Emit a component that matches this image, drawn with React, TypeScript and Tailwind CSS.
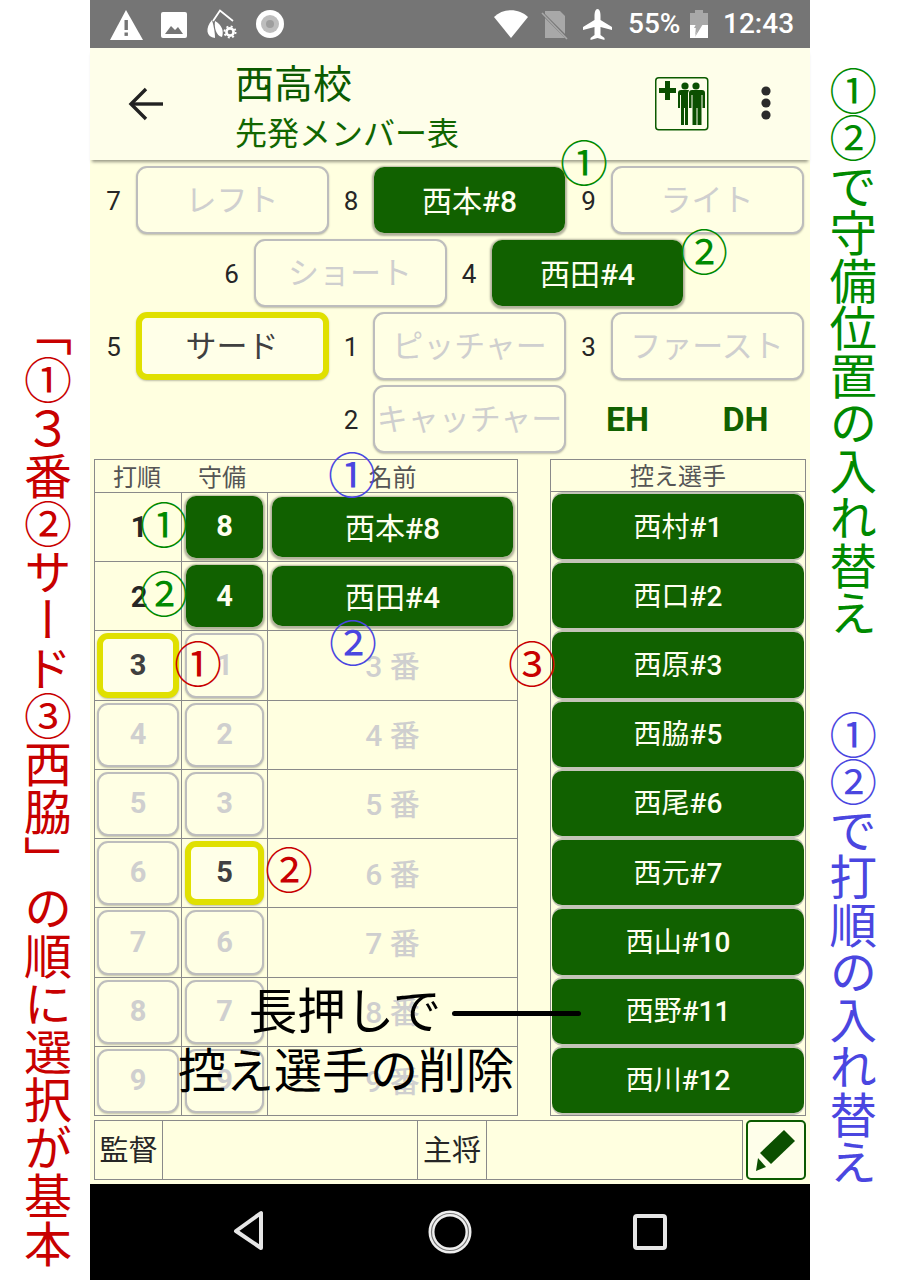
import React from 'react';

const FONT = 'font-["Roboto","Noto_Sans_CJK_JP",sans-serif]';

const GREEN = 'bg-[#116100] bg-clip-padding border border-transparent text-[#fffff0] shadow-[0_1px_2px_1px_rgba(0,0,0,0.3)]';
const EMPTY = 'bg-[#ffffe4] text-[#cfcfcf] border-2 border-[#bdbdbd] shadow-[0_1px_2px_rgba(0,0,0,0.25)]';
const PICKED = 'bg-[#ffffe8] text-[#404040] border-[6px] border-[#e0e000] shadow-[0_1px_2px_rgba(0,0,0,0.25)]';

type Kind = 'green' | 'empty' | 'picked';

const kindClass = (kind: Kind) => (kind === 'green' ? GREEN : kind === 'picked' ? PICKED : EMPTY);

// the # part of a player name is a bit heavier than the kanji
const PlayerName = ({ name }: { name: string }) => (
  <>
    {name.slice(0, 2)}
    <span className="font-medium">{name.slice(2)}</span>
  </>
);

const Slot = ({ num, label, kind = 'empty' }: { num: string; label: string; kind?: Kind }) => (
  <div className="flex items-center w-[237.5px] shrink-0">
    <span className="w-[44px] text-center text-[26px] text-[#262626] pt-[3px]">{num}</span>
    <div
      className={`w-[193px] h-[68px] pt-[3px] rounded-[11px] flex items-center justify-center whitespace-nowrap ${
        kind === 'green' ? 'text-[30px]' : 'text-[31px]'
      } ${kindClass(kind)}`}
    >
      {kind === 'green' ? <PlayerName name={label} /> : label}
    </div>
  </div>
);

const OrderButton = ({ label, kind = 'empty' }: { label: string; kind?: Kind }) => (
  <div className={`w-full h-full rounded-[11px] flex items-center justify-center font-bold text-[29px] ${kindClass(kind)}`}>
    {label}
  </div>
);

const Mark = ({ text, color, x, y, size = 48 }: { text: string; color: string; x: number; y: number; size?: number }) => (
  <span
    className={`absolute -translate-x-1/2 -translate-y-1/2 leading-none whitespace-nowrap ${color}`}
    style={{ left: x, top: y, fontSize: size }}
  >
    {text}
  </span>
);

const rows = [
  { o: '1', d: '8', name: '西本#8', filled: true },
  { o: '2', d: '4', name: '西田#4', filled: true },
  { o: '3', d: '1', name: '3 番', oKind: 'picked' as Kind },
  { o: '4', d: '2', name: '4 番' },
  { o: '5', d: '3', name: '5 番' },
  { o: '6', d: '5', name: '6 番', dKind: 'picked' as Kind },
  { o: '7', d: '6', name: '7 番' },
  { o: '8', d: '7', name: '8 番' },
  { o: '9', d: '9', name: '9 番' },
];

const bench = ['西村#1', '西口#2', '西原#3', '西脇#5', '西尾#6', '西元#7', '西山#10', '西野#11', '西川#12'];

const StatusBar = () => (
  <div className="h-[48px] bg-[#757575] flex items-center shrink-0 text-white">
    <svg width="180" height="34" viewBox="0 0 180 34" className="ml-[18px]" fill="#fff">
      <path d="M18 3 L35 33 H2 Z" />
      <rect x="16.5" y="13" width="3.4" height="10" fill="#757575" />
      <rect x="16.5" y="25.5" width="3.4" height="3.4" fill="#757575" />
      <rect x="53" y="5" width="26" height="26" rx="2" />
      <path d="M57 27 L63 19 L67 23 L70 20 L75 27 Z" fill="#757575" />
      <path d="M105 14 L112 3.5 L125 14" fill="none" stroke="#fff" strokeWidth="1.8" />
      <path d="M104 13 C97 21 98 30 107 31 C107 26 106 20 104 13 Z" />
      <path d="M107 14 C114 18 116 24 114 30 C108 29 106 20 107 14 Z" />
      <circle cx="122" cy="25" r="3.6" fill="none" stroke="#fff" strokeWidth="2.6" />
      <circle cx="122" cy="25" r="5.6" fill="none" stroke="#fff" strokeWidth="1.8" strokeDasharray="2 2.4" />
      <circle cx="162" cy="17" r="14" />
      <circle cx="162" cy="17" r="9" fill="#bdbdbd" />
      <circle cx="162" cy="17" r="4" fill="#9e9e9e" />
    </svg>
    <svg width="125" height="34" viewBox="0 0 125 34" className="ml-[203px]">
      <path d="M3 10 C12 1 28 1 37 10 L20 31 Z" fill="#fff" />
      <path d="M54 4 H69 L74 9 V31 H54 Z" fill="#a8a8a8" />
      <path d="M51 6 L76 31" stroke="#757575" strokeWidth="3" />
      <path d="M51 6 L76 32" stroke="#a8a8a8" strokeWidth="1.6" />
      <path d="M106.5 2 C108.5 2 109.5 5 109.5 9 V13 L121 20 V23 L109.5 20 V28 L113.5 31 V33 L106.5 31 L99.5 33 V31 L103.5 28 V20 L92 23 V20 L103.5 13 V9 C103.5 5 104.5 2 106.5 2 Z" fill="#fff" />
    </svg>
    <span className="ml-[12px] text-[28px] leading-none text-white font-medium w-[61px]">55%</span>
    <svg width="18" height="28" viewBox="0 0 18 28" className="ml-[1px]">
      <rect x="0" y="3" width="18" height="25" fill="#a8a8a8" />
      <rect x="5" y="0" width="8" height="3" fill="#a8a8a8" />
      <path d="M0 15 H6 L5 28 H0 Z M10 15 H18 V28 H4 Z" fill="#fff" />
      <path d="M11 5 L4 18 H8 L5 27 L13 14 H9 Z" fill="#a8a8a8" />
    </svg>
    <span className="ml-[15px] text-[28px] leading-none text-white font-medium whitespace-nowrap">12:43</span>
  </div>
);

const AppBar = () => (
  <div className="h-[112px] bg-[#fefeea] shrink-0 flex shadow-[0_4px_3px_-2px_rgba(0,0,0,0.4)] relative">
    <svg width="40" height="36" viewBox="0 0 40 36" className="ml-[37px] mt-[38px]" fill="none" stroke="#222" strokeWidth="3.4">
      <path d="M36 18 H5" />
      <path d="M19 3 L4 18 L19 33" />
    </svg>
    <div className="ml-[68px] w-[302px] flex flex-col">
      <span className="text-[39px] leading-none mt-[18px] text-[#0b5a00]">西高校</span>
      <span className="text-[32px] leading-none mt-[13px] text-[#116600]">先発メンバー表</span>
    </div>
    <svg width="54" height="54" viewBox="0 0 54 54" className="ml-[118px] mt-[29px]">
      <rect x="0.75" y="0.75" width="52" height="52" rx="3" fill="#fefeea" stroke="#0b5a00" strokeWidth="1.5" />
      <path d="M10 4 h5 v7 h6 v5 h-6 v7 h-5 v-7 h-6 v-5 h6 Z" fill="#0b4f00" />
      <circle cx="30" cy="9" r="3.6" fill="#0b4f00" />
      <circle cx="41" cy="9" r="3.6" fill="#0b4f00" />
      <path d="M36 13 h11 q3 0 3 3 v15 h-2.5 v-13 h-1 v30 h-4 v-17 h-1 v17 h-4 v-30 h-1 v13 h-2.5 v-15 q0 -3 3 -3 Z" fill="#0b4f00" />
      <path d="M26 13 h8 l-1 3 v32 h-3 v-17 h-1 v17 h-3 v-30 h-1 v13 h-2 v-15 q0 -3 3 -3 Z" fill="#0b4f00" />
    </svg>
    <svg width="12" height="36" viewBox="0 0 12 36" className="ml-[51px] mt-[37px]" fill="#2b2b2b">
      <circle cx="6" cy="6" r="4.6" />
      <circle cx="6" cy="18" r="4.6" />
      <circle cx="6" cy="30" r="4.6" />
    </svg>
  </div>
);

const Field = () => (
  <div className="h-[299px] shrink-0 pt-[6px] flex flex-col gap-[5px] pl-[1.5px]">
    <div className="flex">
      <Slot num="7" label="レフト" />
      <Slot num="8" label="西本#8" kind="green" />
      <Slot num="9" label="ライト" />
    </div>
    <div className="flex pl-[118px]">
      <Slot num="6" label="ショート" />
      <Slot num="4" label="西田#4" kind="green" />
    </div>
    <div className="flex">
      <Slot num="5" label="サード" kind="picked" />
      <Slot num="1" label="ピッチャー" />
      <Slot num="3" label="ファースト" />
    </div>
    <div className="flex pl-[237.5px] items-center">
      <Slot num="2" label="キャッチャー" />
      <span className="w-[118px] text-center font-bold text-[34px] text-[#116100] pl-[4px]">EH</span>
      <span className="w-[118px] text-center font-bold text-[34px] text-[#116100] pl-[4px]">DH</span>
    </div>
  </div>
);

const OrderTable = () => (
  <div className="w-[424px] h-[657px] border border-[#8a8a8a] grid grid-cols-[87px_86px_1fr] grid-rows-[32px_repeat(9,1fr)]">
    <div className="flex items-center justify-center text-[24px] text-[#555] pr-[3px] pt-[3px]">打順</div>
    <div className="flex items-center justify-center text-[24px] text-[#555] pr-[6px] pt-[3px]">守備</div>
    <div className="flex items-center justify-center text-[24px] text-[#555] pt-[3px]">名前</div>
    {rows.map((r) => (
      <React.Fragment key={r.o}>
        <div className="border-t border-r border-[#8a8a8a] p-[2px] flex items-center justify-center">
          {r.filled ? (
            <span className="font-bold text-[29px] text-[#262626] ml-[2px] pt-[2px]">{r.o}</span>
          ) : (
            <OrderButton label={r.o} kind={r.oKind ?? 'empty'} />
          )}
        </div>
        <div className="border-t border-r border-[#8a8a8a] px-[3px] py-[2px]">
          <OrderButton label={r.d} kind={r.filled ? 'green' : r.dKind ?? 'empty'} />
        </div>
        <div className="border-t border-[#8a8a8a] px-[3px] py-[3px] flex items-center justify-center">
          {r.filled ? (
            <div className={`w-full h-full rounded-[11px] flex items-center justify-center text-[30px] pt-[3px] ${GREEN}`}>
              <PlayerName name={r.name} />
            </div>
          ) : (
            <span className="text-[30px] font-medium text-[#cfcfcf] pt-[2px]">{r.name}</span>
          )}
        </div>
      </React.Fragment>
    ))}
  </div>
);

const BenchTable = () => (
  <div className="w-[256px] h-[657px] border border-[#8a8a8a] flex flex-col">
    <div className="h-[32px] shrink-0 flex items-center justify-center text-[24px] text-[#555] border-b border-[#8a8a8a] pt-[3px]">控え選手</div>
    <div className="flex-1 grid grid-rows-9 px-px">
      {bench.map((b) => (
        <div key={b} className="py-[2px]">
          <div className="h-full rounded-[10px] bg-[#116100] text-[#fffff0] flex items-center justify-center text-[28px] pt-[2px] shadow-[0_2px_0_#c4c4b8,0_-2px_0_#c4c4b8]">
            <PlayerName name={b} />
          </div>
        </div>
      ))}
    </div>
  </div>
);

const Staff = () => (
  <div className="flex gap-[3px] pl-[4px] mt-[4px] h-[60px]">
    <div className="w-[649px] h-full border border-[#8a8a8a] flex text-[29px] text-[#262626]">
      <div className="w-[68px] flex items-center justify-center border-r border-[#8a8a8a] pt-[3px]">監督</div>
      <div className="w-[255px] border-r border-[#8a8a8a]" />
      <div className="w-[69px] flex items-center justify-center border-r border-[#8a8a8a] pt-[3px]">主将</div>
      <div className="flex-1" />
    </div>
    <div className="w-[60px] h-full border-2 border-[#0b5a00] rounded-[5px] bg-[#fefeea] flex items-center justify-center">
      <svg width="42" height="44" viewBox="0 0 42 44" fill="#0b4f00">
        <path d="M29 2 L40 13 L16 36 L5 25 Z" />
        <path d="M3 30 L11 39 L1 43 Z" />
      </svg>
    </div>
  </div>
);

const NavBar = () => (
  <div className="h-[96px] mt-[4px] bg-black flex items-center justify-center">
    <svg width="440" height="50" viewBox="0 0 440 50" fill="none" stroke="#e6e6e6">
      <path d="M31 6 V41 L6 24 Z" strokeWidth="4" strokeLinejoin="round" />
      <circle cx="220" cy="25" r="18.5" strokeWidth="6" stroke="#eeeeee" />
      <circle cx="220" cy="25" r="18.5" strokeWidth="1.2" stroke="#777777" />
      <rect x="405" y="9" width="30" height="32" rx="2" strokeWidth="4" />
    </svg>
  </div>
);

export default function App() {
  return (
    <div className={`relative w-[900px] h-[1280px] bg-white flex overflow-hidden ${FONT}`}>
      <div className="w-[90px] shrink-0 flex justify-center pt-[308px] pr-[4px]">
        <span className="[writing-mode:vertical-rl] text-[48px] leading-none text-[#c80000] whitespace-nowrap">「①３番②サード③西脇」の順に選択が基本</span>
      </div>

      <div className="w-[720px] shrink-0 flex flex-col bg-[#ffffe0]">
        <StatusBar />
        <AppBar />
        <Field />
        <div className="flex justify-between pl-[4px] pr-[4px]">
          <OrderTable />
          <BenchTable />
        </div>
        <Staff />
        <NavBar />
      </div>

      <div className="w-[90px] shrink-0 flex flex-col items-center pt-[67px] pr-[14px]">
        <span className="[writing-mode:vertical-rl] text-[47.5px] leading-none text-[#008a00] whitespace-nowrap">①②で守備位置の入れ替え</span>
        <span className="[writing-mode:vertical-rl] text-[47.5px] leading-none text-[#4a46e0] whitespace-nowrap mt-[74px]">①②で打順の入れ替え</span>
      </div>

      <Mark text="①" color="text-[#008a00]" x={584} y={165} />
      <Mark text="②" color="text-[#008a00]" x={704} y={254} />
      <Mark text="①" color="text-[#4a46e0]" x={352} y={477} />
      <Mark text="①" color="text-[#008a00]" x={164} y={527} />
      <Mark text="②" color="text-[#008a00]" x={164} y={596} />
      <Mark text="②" color="text-[#4a46e0]" x={353} y={645} />
      <Mark text="①" color="text-[#c80000]" x={198} y={666} />
      <Mark text="③" color="text-[#c80000]" x={532} y={666} />
      <Mark text="②" color="text-[#c80000]" x={289} y={872} />
      <Mark text="長押しで" color="text-black" x={345} y={1013} size={48.5} />
      <Mark text="控え選手の削除" color="text-black" x={346} y={1072} size={48} />
      <div className="absolute left-[452px] top-[1011px] w-[129px] h-[5px] rounded-full bg-black" />
    </div>
  );
}
